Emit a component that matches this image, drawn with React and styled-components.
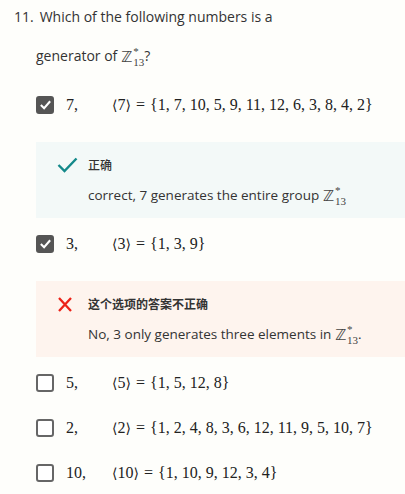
import React from 'react';
import styled, { createGlobalStyle } from 'styled-components';

const GlobalStyle = createGlobalStyle`
  html, body {
    margin: 0;
    padding: 0;
    background: #fefefb;
  }
  body {
    font-family: "Open Sans", "Noto Sans CJK SC", sans-serif;
    color: #333;
  }
`;

const Page = styled.div`
  padding: 7px 0 0 14px;
`;

const Title = styled.div`
  font-size: 14px;
  line-height: 20px;
  display: flex;
  gap: 6px;
`;

const Body = styled.div`
  padding-left: 22px;
`;

const Prompt = styled.div`
  font-size: 14px;
  line-height: 20px;
  margin-top: 19px;
`;

const List = styled.div`
  margin-top: 15px;
`;

const Row = styled.div`
  height: 45px;
  display: flex;
  align-items: center;
`;

const Box = styled.span`
  width: 18px;
  height: 18px;
  box-sizing: border-box;
  border-radius: 3px;
  flex: none;
  display: flex;
  align-items: center;
  justify-content: center;
  background: ${p => (p.$checked ? '#555' : '#fff')};
  border: 2px solid ${p => (p.$checked ? '#555' : '#666')};
`;

const Label = styled.span`
  font-family: "Liberation Serif", "DejaVu Serif", serif;
  font-size: 16px;
  color: #222;
  margin-left: 12px;
  min-width: 20px;
`;

const Math = styled.span`
  font-family: "Liberation Serif", "DejaVu Serif", serif;
  font-size: 16px;
  color: #222;
  margin-left: 26px;
  white-space: pre;
`;

const Angle = styled.span`
  font-family: "DejaVu Serif", serif;
  font-size: 14px;
`;

const Eq = styled.span`
  margin: 0 5px;
`;

const Feedback = styled.div`
  margin: 15px 0 3px;
  height: 76px;
  box-sizing: border-box;
  padding: 14px 0 0 21px;
  display: grid;
  grid-template-columns: 31px 1fr;
  grid-template-rows: 18px 32px;
  align-items: center;
  background: ${p => (p.$ok ? '#f3f9f8' : '#fef4ee')};
`;

const FbTitle = styled.div`
  font-size: 12px;
  font-weight: ${p => (p.$ok ? 500 : 700)};
  color: #333;
`;

const FbText = styled.div`
  grid-column: 2;
  font-size: 13.5px;
  color: #333;
  align-self: end;
`;

const Zset = styled.span`
  font-family: "DejaVu Sans", sans-serif;
  font-size: 15px;
  display: inline-flex;
  align-items: center;
  vertical-align: middle;
  color: #444;
`;

const Scripts = styled.span`
  display: inline-flex;
  flex-direction: column;
  font-family: "Liberation Serif", serif;
  font-size: 11px;
  line-height: 8px;
  margin-left: 1px;
`;

const Sup = styled.span`
  height: 8px;
`;

const Sub = styled.span`
  height: 9px;
  padding-top: 3px;
`;

const Z13 = () => (
  <Zset>
    ℤ
    <Scripts>
      <Sup>*</Sup>
      <Sub>13</Sub>
    </Scripts>
  </Zset>
);

const Check = () => (
  <svg width="13" height="13" viewBox="0 0 14 14">
    <path d="M2 7.5 L5.5 11 L12 3.5" fill="none" stroke="#fff" strokeWidth="2.2" />
  </svg>
);

const OkIcon = () => (
  <svg width="21" height="16" viewBox="0 0 21 16">
    <path d="M1.5 8 L7.5 14 L19.5 1.5" fill="none" stroke="#13898a" strokeWidth="2.4" />
  </svg>
);

const BadIcon = () => (
  <svg width="16" height="15" viewBox="0 0 16 15">
    <path d="M2 1 L14 14 M14 1 L2 14" fill="none" stroke="#ec2218" strokeWidth="2.3" />
  </svg>
);

const options = [
  {
    label: '7,', gen: '7', set: '1, 7, 10, 5, 9, 11, 12, 6, 3, 8, 4, 2', checked: true,
    fb: { ok: true, title: '正确', text: 'correct, 7 generates the entire group ', tail: '' },
  },
  {
    label: '3,', gen: '3', set: '1, 3, 9', checked: true,
    fb: { ok: false, title: '这个选项的答案不正确', text: 'No, 3 only generates three elements in ', tail: '.' },
  },
  { label: '5,', gen: '5', set: '1, 5, 12, 8' },
  { label: '2,', gen: '2', set: '1, 2, 4, 8, 3, 6, 12, 11, 9, 5, 10, 7' },
  { label: '10,', gen: '10', set: '1, 10, 9, 12, 3, 4' },
];

export default function App() {
  return (
    <Page>
      <GlobalStyle />
      <Title>
        <span>11.</span>
        <span>Which of the following numbers is a</span>
      </Title>
      <Body>
        <Prompt>
          generator of <Z13 />?
        </Prompt>
        <List>
          {options.map(o => (
            <React.Fragment key={o.label}>
              <Row>
                <Box $checked={o.checked}>{o.checked && <Check />}</Box>
                <Label>{o.label}</Label>
                <Math>
                  <Angle>⟨</Angle>{o.gen}<Angle>⟩</Angle><Eq>=</Eq>{'{'}{o.set}{'}'}
                </Math>
              </Row>
              {o.fb && (
                <Feedback $ok={o.fb.ok}>
                  {o.fb.ok ? <OkIcon /> : <BadIcon />}
                  <FbTitle $ok={o.fb.ok}>{o.fb.title}</FbTitle>
                  <FbText>
                    {o.fb.text}
                    <Z13 />
                    {o.fb.tail}
                  </FbText>
                </Feedback>
              )}
            </React.Fragment>
          ))}
        </List>
      </Body>
    </Page>
  );
}
